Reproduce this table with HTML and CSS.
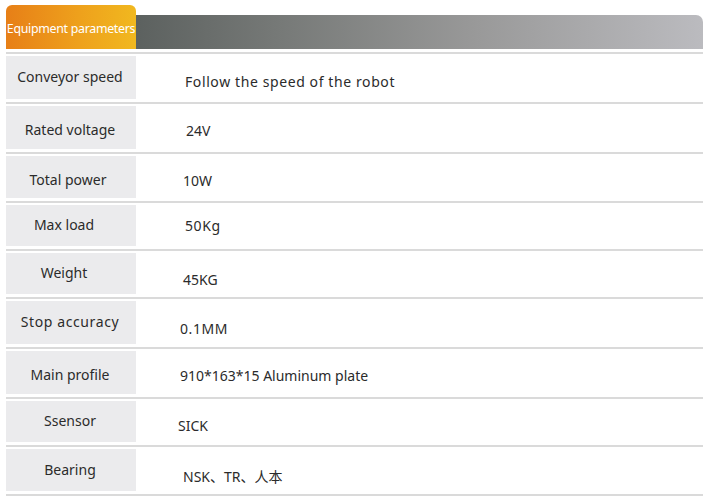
FILE: index.html
```html
<!DOCTYPE html>
<html lang="en">
<head>
<meta charset="utf-8">
<title>Equipment parameters</title>
<link rel="stylesheet" href="styles.css">
</head>
<body>
<div class="sheet">
  <div class="head">
    <div class="tab">Equipment parameters</div>
    <div class="bar"></div>
  </div>
  <div class="rows">
    <div class="row r50"><div class="lab">Conveyor speed</div><div class="val wide s4 x3">Follow the speed of the robot</div></div>
    <div class="row r50"><div class="lab s3">Rated voltage</div><div class="val s3 x4">24V</div></div>
    <div class="row r49"><div class="lab s3 shift">Total power</div><div class="val s3 x1">10W</div></div>
    <div class="row r48"><div class="lab shift-lg">Max load</div><div class="val x3 wide">50Kg</div></div>
    <div class="row r48"><div class="lab shift-lg">Weight</div><div class="val s6 x1">45KG</div></div>
    <div class="row r50"><div class="lab spaced">Stop accuracy</div><div class="val s6 x0 wide">0.1MM</div></div>
    <div class="row r50"><div class="lab s3">Main profile</div><div class="val s3 x0">910*163*15 Aluminum plate</div></div>
    <div class="row r48"><div class="lab">Ssensor</div><div class="val s4 xm">SICK</div></div>
    <div class="row r49"><div class="lab">Bearing</div><div class="val s6 x1">NSK、TR、人本</div></div>
  </div>
</div>
</body>
</html>
```
FILE: styles.css
```css
html, body {
  margin: 0;
  padding: 0;
  background: #ffffff;
}
body {
  font-family: "Noto Sans", "Noto Sans CJK SC", sans-serif;
  color: #2b2b2b;
}
.sheet {
  width: 697px;
  margin-left: 6px;
  padding-top: 5px;
}
.head {
  display: flex;
  align-items: flex-end;
  height: 44px;
}
.tab {
  width: 130px;
  height: 44px;
  border-radius: 6px 6px 0 0;
  background: linear-gradient(90deg, #e77f17 0%, #eea01c 55%, #f1b81f 100%);
  color: #ffffff;
  font-size: 12.4px;
  letter-spacing: -0.3px;
  display: flex;
  align-items: center;
  justify-content: center;
  padding-top: 3px;
  box-sizing: border-box;
  white-space: nowrap;
}
.bar {
  flex: 1;
  height: 34px;
  border-radius: 0 7px 0 0;
  background: linear-gradient(90deg, #5c615f 0%, #767977 25%, #999999 60%, #bbbbbf 100%);
}
.rows {
  margin-top: 3px;
  border-bottom: 2px solid #dadada;
}
.row {
  border-top: 2px solid #dadada;
  display: grid;
  grid-template-columns: 130px 1fr;
  padding: 2px 0 3px;
  box-sizing: border-box;
}
.r50 { height: 50px; }
.r49 { height: 49px; }
.r48 { height: 48px; }
.lab {
  background: #ebebed;
  display: flex;
  align-items: center;
  justify-content: center;
  font-size: 14px;
  padding-right: 2px;
  padding-bottom: 2px;
  box-sizing: border-box;
  white-space: nowrap;
}
.lab.s3 { padding-top: 4px; padding-bottom: 0; }
.lab.shift { padding-right: 6px; }
.lab.shift-lg { padding-right: 14px; }
.spaced { letter-spacing: 0.6px; }
.val {
  display: flex;
  align-items: center;
  font-size: 14px;
  padding-left: 46px;
  box-sizing: border-box;
  white-space: nowrap;
}
.wide { letter-spacing: 0.6px; }
.s3 { padding-top: 6px; }
.s4 { padding-top: 8px; }
.s6 { padding-top: 12px; }
.x0 { padding-left: 44px; }
.x1 { padding-left: 47px; }
.x3 { padding-left: 49px; }
.x4 { padding-left: 50px; }
.xm { padding-left: 42px; }
```
